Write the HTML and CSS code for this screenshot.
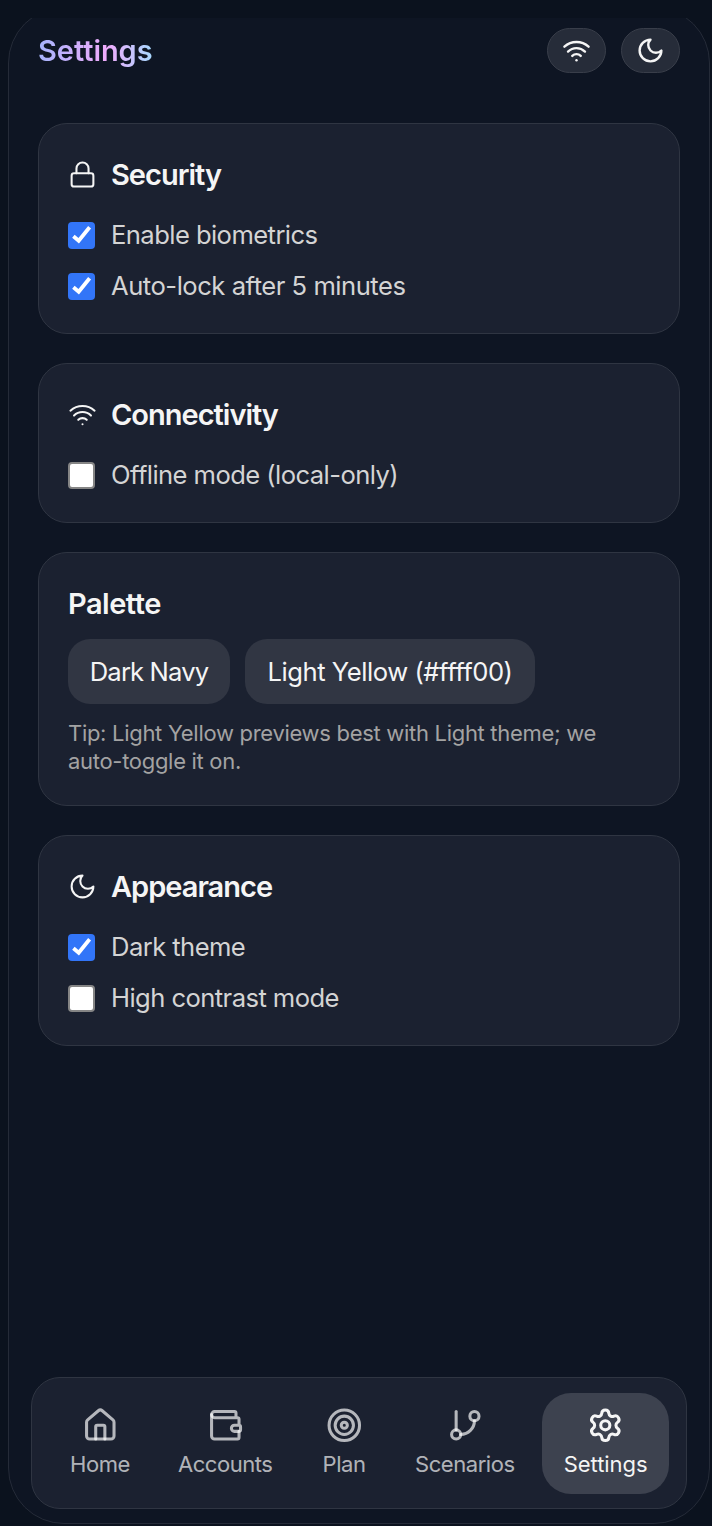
FILE: index.html
```html
<!DOCTYPE html>
<html lang="en">
<head>
<meta charset="utf-8">
<title>Settings</title>
<link rel="stylesheet" href="styles.css">
</head>
<body>
<svg class="sprite" width="0" height="0">
  <symbol id="wifi" viewBox="0 0 24 24"><path d="M12 20h.01"/><path d="M2 8.82a15 15 0 0 1 20 0"/><path d="M5 12.859a10 10 0 0 1 14 0"/><path d="M8.5 16.429a5 5 0 0 1 7 0"/></symbol>
  <symbol id="moon" viewBox="0 0 24 24"><path d="M12 3a6 6 0 0 0 9 9 9 9 0 1 1-9-9Z"/></symbol>
  <symbol id="lock" viewBox="0 0 24 24"><rect x="3" y="11" width="18" height="11" rx="2"/><path d="M7 11V7a5 5 0 0 1 10 0v4"/></symbol>
  <symbol id="check" viewBox="0 0 27 27"><path d="M5.4 14.2 10.7 18.7 21.6 5.3"/></symbol>
</svg>
<div class="viewport">
  <div class="phone">
    <header class="topbar">
      <h1 class="title">Settings</h1>
      <div class="actions">
        <button class="pill"><svg class="icon bold"><use href="#wifi"/></svg></button>
        <button class="pill"><svg class="icon bold"><use href="#moon"/></svg></button>
      </div>
    </header>
    <main class="content">
      <section class="card">
        <h2 class="heading tight"><svg class="icon"><use href="#lock"/></svg><span>Security</span></h2>
        <div class="options">
          <label class="option"><span class="box on"><svg><use href="#check"/></svg></span><span>Enable biometrics</span></label>
          <label class="option wide"><span class="box on"><svg><use href="#check"/></svg></span><span>Auto-lock after 5 minutes</span></label>
        </div>
      </section>
      <section class="card">
        <h2 class="heading tight"><svg class="icon"><use href="#wifi"/></svg><span>Connectivity</span></h2>
        <div class="options">
          <label class="option"><span class="box"></span><span>Offline mode (local-only)</span></label>
        </div>
      </section>
      <section class="card">
        <h2 class="heading">Palette</h2>
        <div class="swatches">
          <button class="swatch navy">Dark Navy</button>
          <button class="swatch yellow">Light Yellow (#ffff00)</button>
        </div>
        <p class="tip">Tip: Light Yellow previews best with Light theme; we<br>auto-toggle it on.</p>
      </section>
      <section class="card">
        <h2 class="heading tight"><svg class="icon"><use href="#moon"/></svg><span>Appearance</span></h2>
        <div class="options">
          <label class="option"><span class="box on"><svg><use href="#check"/></svg></span><span>Dark theme</span></label>
          <label class="option"><span class="box"></span><span>High contrast mode</span></label>
        </div>
      </section>
    </main>
    <nav class="tabs">
      <a class="tab home"><svg class="tab-icon" viewBox="0 0 24 24"><path d="M15 21v-8a1 1 0 0 0-1-1h-4a1 1 0 0 0-1 1v8"/><path d="M3 10a2 2 0 0 1 .709-1.528l7-5.999a2 2 0 0 1 2.582 0l7 5.999A2 2 0 0 1 21 10v9a2 2 0 0 1-2 2H5a2 2 0 0 1-2-2z"/></svg><span>Home</span></a>
      <a class="tab accounts"><svg class="tab-icon" viewBox="0 0 24 24"><path d="M19 7V4a1 1 0 0 0-1-1H5a2 2 0 0 0 0 4h15a1 1 0 0 1 1 1v4h-3a2 2 0 0 0 0 4h3a1 1 0 0 0 1-1v-2a1 1 0 0 0-1-1"/><path d="M3 5v14a2 2 0 0 0 2 2h15a1 1 0 0 0 1-1v-4"/></svg><span>Accounts</span></a>
      <a class="tab plan"><svg class="tab-icon" viewBox="0 0 24 24"><circle cx="12" cy="12" r="10"/><circle cx="12" cy="12" r="6"/><circle cx="12" cy="12" r="2"/></svg><span>Plan</span></a>
      <a class="tab scenarios"><svg class="tab-icon" viewBox="0 0 24 24"><path d="M6 3v12"/><circle cx="18" cy="6" r="3"/><circle cx="6" cy="18" r="3"/><path d="M18 9a9 9 0 0 1-9 9"/></svg><span>Scenarios</span></a>
      <a class="tab settings active"><svg class="tab-icon" viewBox="0 0 24 24"><path d="M9.671 4.136a2.34 2.34 0 0 1 4.659 0 2.34 2.34 0 0 0 3.319 1.915 2.34 2.34 0 0 1 2.33 4.033 2.34 2.34 0 0 0 0 3.831 2.34 2.34 0 0 1-2.33 4.033 2.34 2.34 0 0 0-3.319 1.915 2.34 2.34 0 0 1-4.659 0 2.34 2.34 0 0 0-3.32-1.915 2.34 2.34 0 0 1-2.33-4.033 2.34 2.34 0 0 0 0-3.831A2.34 2.34 0 0 1 6.35 6.051a2.34 2.34 0 0 0 3.319-1.915"/><circle cx="12" cy="12" r="3"/></svg><span>Settings</span></a>
    </nav>
  </div>
</div>
</body>
</html>
```
FILE: styles.css
```css
* { box-sizing: border-box; }
body {
  margin: 0;
  height: 1526px;
  padding-top: 18px;
  overflow: hidden;
  background: #0b121e;
  color: #f5f5f5;
  font-family: Inter, "Liberation Sans", sans-serif;
}
h1, h2, p { margin: 0; }
button { border: 0; color: inherit; font: inherit; }
.sprite { display: block; }
.viewport { height: 1508px; padding: 0 2px 0 8px; overflow: hidden; }
.phone {
  display: flex;
  flex-direction: column;
  height: 1517px;
  margin-top: -11px;
  padding: 20px 22px 14px;
  border: 1px solid #252b38;
  border-radius: 56px;
  background: #0e1523;
}
.topbar {
  display: flex;
  justify-content: space-between;
  align-items: center;
  height: 45px;
  padding: 0 7px;
}
.title {
  font-size: 29px;
  line-height: 44px;
  font-weight: 600;
  letter-spacing: -0.05px;
  background: linear-gradient(90deg, #a5b4fc, #f0abfc 60%, #a5d8fd);
  background-clip: text;
  -webkit-background-clip: text;
  color: transparent;
}
.actions { display: flex; gap: 15px; }
.pill {
  display: grid;
  place-items: center;
  width: 59px;
  height: 45px;
  padding: 0;
  border: 1px solid #393e4a;
  border-radius: 23px;
  background: #262c39;
}
.icon {
  width: 29px;
  height: 29px;
  flex: none;
  margin-bottom: 2px;
  fill: none;
  stroke: #f5f5f5;
  stroke-width: 1.7;
  stroke-linecap: round;
  stroke-linejoin: round;
}
.icon.bold { margin-bottom: 0; stroke-width: 2; }
.content {
  display: flex;
  flex-direction: column;
  gap: 29px;
  flex: 1;
  padding: 50px 7px 0;
}
.card {
  padding: 29px 29px 28.5px;
  border: 1px solid #2f3542;
  border-radius: 29px;
  background: #1b2130;
}
.heading {
  display: flex;
  align-items: center;
  gap: 14px;
  height: 44px;
  font-size: 29px;
  line-height: 44px;
  font-weight: 600;
  letter-spacing: -0.5px;
}
.heading.tight { letter-spacing: -1px; }
.options { display: flex; flex-direction: column; gap: 15px; margin: 20px 0 0.5px; }
.option {
  display: flex;
  align-items: center;
  gap: 16px;
  height: 36px;
  color: #d4d4d4;
  font-size: 25.6px;
  font-weight: 430;
  line-height: 36px;
  letter-spacing: -0.57px;
}
.option.wide { letter-spacing: -0.48px; }
.box {
  width: 27px;
  height: 27px;
  flex: none;
  border: 2px solid #858585;
  border-radius: 4px;
  background: #fff;
}
.box.on { border: 0; background: #3275f8; }
.box svg { display: block; width: 27px; height: 27px; fill: none; stroke: #fff; stroke-width: 3.8; }
.swatches { display: flex; gap: 15px; margin-top: 13px; }
.swatch {
  height: 65px;
  padding: 0;
  border-radius: 22px;
  background: #313643;
  font-size: 25.6px;
  font-weight: 430;
  letter-spacing: -0.45px;
  white-space: nowrap;
}
.navy { width: 162px; letter-spacing: -0.85px; }
.yellow { width: 290px; }
.tip {
  margin-top: 15px;
  padding-bottom: 1.5px;
  color: #a3a3a3;
  font-size: 22px;
  font-weight: 430;
  line-height: 28px;
  letter-spacing: -0.3px;
  white-space: nowrap;
}
.tabs {
  display: flex;
  gap: 6px;
  height: 132px;
  padding: 15px 17px 14px 18px;
  border: 1px solid #2f3542;
  border-radius: 29px;
  background: #1b2130;
}
.tab {
  display: flex;
  flex-direction: column;
  align-items: center;
  height: 101px;
  padding-top: 13.5px;
  border-radius: 29px;
  color: rgba(255, 255, 255, .68);
  font-size: 22px;
  font-weight: 430;
  line-height: 29px;
  letter-spacing: -0.45px;
}
.tab span { margin-top: 6.9px; }
.tab.active { background: #3d424f; color: #f5f5f5; letter-spacing: -0.05px; }
.tab-icon {
  width: 36.6px;
  height: 36.6px;
  fill: none;
  stroke: currentColor;
  stroke-width: 2;
  stroke-linecap: round;
  stroke-linejoin: round;
}
.home { width: 100px; }
.accounts { width: 139px; }
.plan { width: 87px; }
.scenarios { width: 143px; }
.settings { width: 127px; }
```
